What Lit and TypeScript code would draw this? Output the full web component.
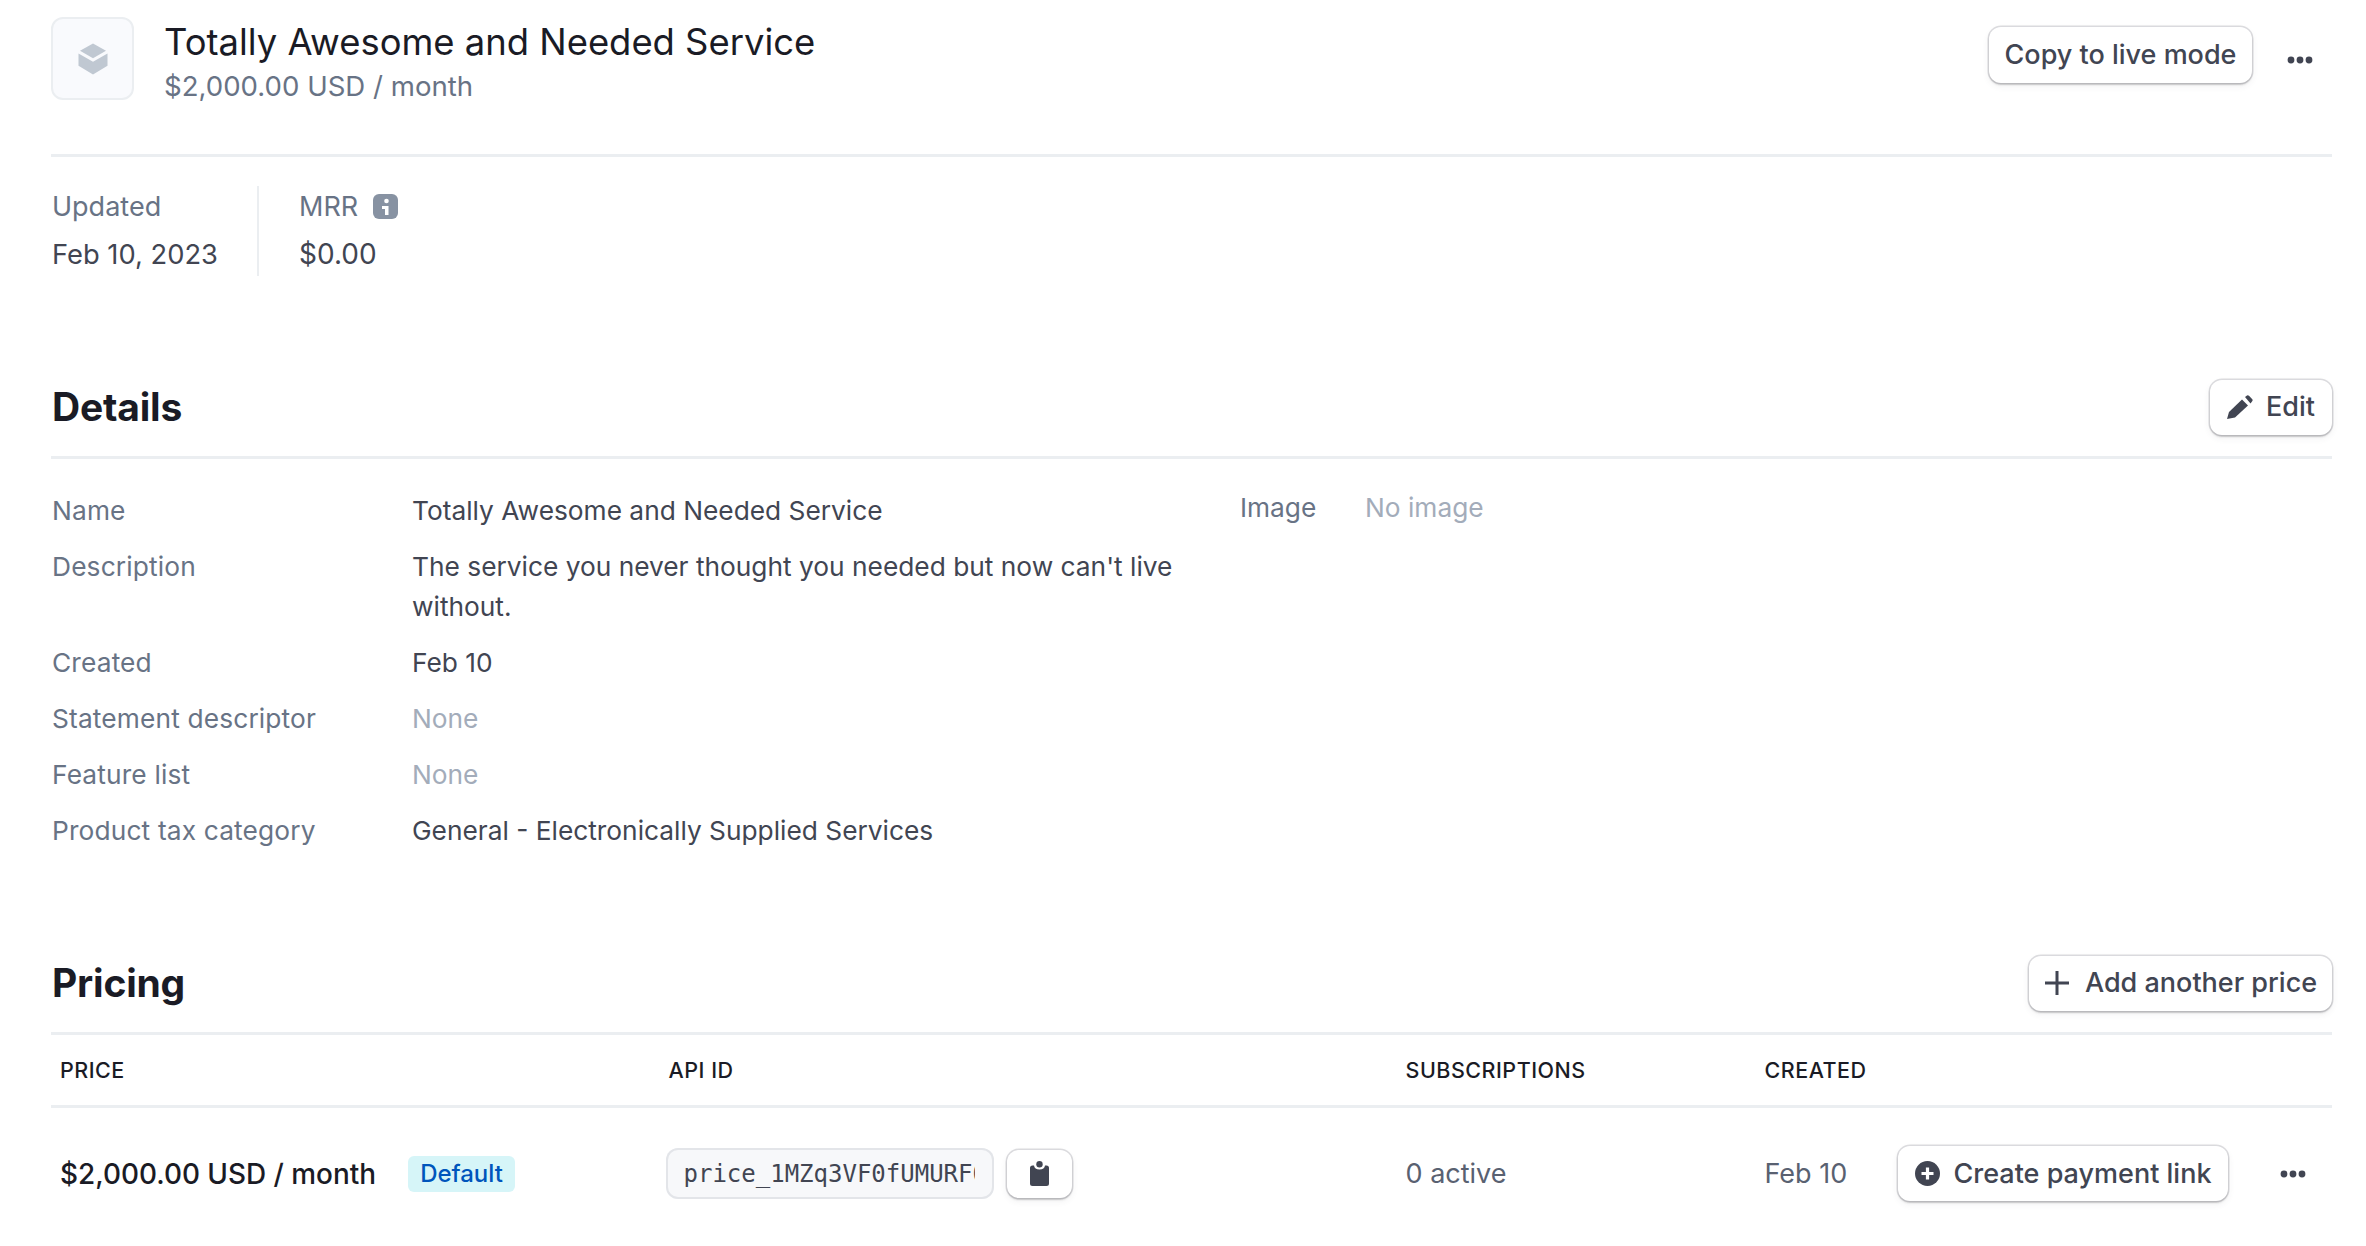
import { LitElement, html, css, svg } from "lit";
import { customElement } from "lit/decorators.js";

const dots = svg`<svg class="dots" viewBox="0 0 26 8" width="26" height="8"><circle cx="4" cy="4" r="3.4"/><circle cx="13" cy="4" r="3.4"/><circle cx="22" cy="4" r="3.4"/></svg>`;

@customElement("app-root")
export class AppRoot extends LitElement {
  static styles = css`
    :host { display: block; width: 2366px; height: 1246px; overflow: hidden; background: #fff; font-family: Inter, "Liberation Sans", sans-serif; color: #414552; font-size: 27px; line-height: 40px; box-sizing: border-box; padding: 17px 34px 0 52px; }
    * { box-sizing: border-box; }
    .top { display: flex; align-items: flex-start; height: 140px; border-bottom: 3px solid #ebeef1; margin-left: -1px; }
    .logo { width: 83px; height: 83px; border: 2.5px solid #ebeef1; border-radius: 12px; background: #f9fafd; display: flex; align-items: center; justify-content: center; margin-right: 31px; flex: none; }
    .titles { flex: 1; margin-left: -1px; }
    .title { font-size: 36.4px; line-height: 46px; color: #1a1b25; margin-top: 2px; }
    .sub { font-size: 27.6px; line-height: 40px; color: #687385; margin-top: 1px; }
    .top-actions { display: flex; align-items: center; padding-top: 10px; }
    .btn { display: inline-flex; align-items: center; height: 55px; background: #fff; border-radius: 12px; font-size: 27px; font-weight: 500; color: #414552; box-shadow: 0 0 0 1.5px rgba(64,68,82,.18), 0 3px 7px rgba(64,68,82,.08), 0 2px 2px rgba(0,0,0,.14); white-space: nowrap; }
    .copy-live { width: 263px; height: 56px; justify-content: center; }
    .dots { fill: #414552; display: block; }
    .top-dots { margin-left: 35px; margin-right: 19px; margin-top: 10px; }
    .stats { display: flex; margin-top: 29px; height: 90px; }
    .stat { display: flex; flex-direction: column; gap: 7px; }
    .stat-a { width: 207px; border-right: 2px solid #ebeef1; }
    .stat-b { padding-left: 40px; }
    .stat .k { color: #687385; display: flex; align-items: center; line-height: 41px; }
    .stat .v { color: #414552; line-height: 41px; font-size: 27.3px; }
    .stat-b .v { font-size: 28px; }
    .info { margin-left: 15px; width: 25px; height: 25px; display: block; }
    .sec-head { display: flex; align-items: center; justify-content: space-between; border-bottom: 3px solid #ebeef1; margin-left: -1px; }
    .sec-head h2 { margin: 0; font-size: 39px; line-height: 58px; font-weight: 700; color: #1a1b25; padding-left: 1px; letter-spacing: -0.2px; }
    .details-head { margin-top: 102px; padding-bottom: 20px; }
    .pricing-head { padding-bottom: 20px; }
    .edit { width: 122px; justify-content: center; gap: 13px; }
    .details { display: flex; padding-top: 32px; height: 495px; font-size: 26.3px; }
    .dl { width: 1188px; display: flex; flex-direction: column; gap: 16px; }
    .row { display: flex; }
    .row .k { width: 360px; color: #687385; flex: none; letter-spacing: 0.15px; }
    .row .v { width: 770px; color: #414552; }
    .row .v.muted, .muted { color: #a3acba; }
    .image { display: flex; margin-top: -3px; }
    .image .k { width: 125px; color: #687385; }
    .add { width: 303px; padding-left: 16px; gap: 16px; }
    .table-head, .table-row { display: grid; grid-template-columns: 608.5px 737px 359px 133.5px 330px 1fr; align-items: center; padding-left: 9px; margin-left: -1px; }
    .table-head { height: 73px; border-bottom: 3px solid #ebeef1; font-size: 21.5px; font-weight: 500; color: #1a1b25; letter-spacing: 0.5px; }
    .table-row { height: 132px; padding-bottom: 1px; }
    .price-cell { display: flex; align-items: center; }
    .price { width: 348px; font-weight: 500; color: #1a1b25; font-size: 27.9px; white-space: nowrap; }
    .badge { width: 107px; height: 36px; display: flex; align-items: center; justify-content: center; background: #d6f5f8; color: #0055bc; border-radius: 6px; font-size: 24px; font-weight: 500; }
    .api-cell { display: flex; align-items: center; gap: 13px; margin-left: -3px; }
    .code { width: 328px; height: 51px; border-radius: 12px; background: #f7f8fa; box-shadow: inset 0 0 0 2px #e3e5e9; padding: 0 18px; display: flex; align-items: center; font-family: "DejaVu Sans Mono", "Liberation Mono", monospace; font-size: 24px; color: #414552; }
    .code span { display: block; overflow: hidden; white-space: nowrap; width: 291px; }
    .clip { width: 65px; height: 48px; justify-content: center; }
    .subs, .created { color: #596171; }
    .pay { width: 330px; justify-content: center; gap: 14px; }
    .row-dots { margin-left: 52px; }
  `;

  private detailRows: [string, string, boolean?][] = [
    ["Name", "Totally Awesome and Needed Service"],
    ["Description", "The service you never thought you needed but now can't live without."],
    ["Created", "Feb 10"],
    ["Statement descriptor", "None", true],
    ["Feature list", "None", true],
    ["Product tax category", "General - Electronically Supplied Services"],
  ];

  render() {
    return html`
      <div class="top">
        <div class="logo">
          <svg width="30" height="32" viewBox="0 0 30 32" fill="#c0c8d2"><path d="M15 0.5 28 7.8 15 15.2 2 7.8Z"/><path d="M0.5 10.5 15 18.8 29.5 10.5V22.8L15 31.5 0.5 22.8Z"/></svg>
        </div>
        <div class="titles">
          <div class="title">Totally Awesome and Needed Service</div>
          <div class="sub">$2,000.00 USD / month</div>
        </div>
        <div class="top-actions">
          <span class="btn copy-live">Copy to live mode</span>
          <span class="top-dots">${dots}</span>
        </div>
      </div>

      <div class="stats">
        <div class="stat stat-a"><div class="k">Updated</div><div class="v">Feb 10, 2023</div></div>
        <div class="stat stat-b">
          <div class="k">MRR
            <svg class="info" viewBox="0 0 25 25"><rect width="25" height="25" rx="6" fill="#8792a2"/><circle cx="13.500" cy="7" r="2.300" fill="#fff"/><path d="M9 12H15.500V21H12V15H9Z" fill="#fff"/></svg>
          </div>
          <div class="v">$0.00</div>
        </div>
      </div>

      <div class="sec-head details-head">
        <h2>Details</h2>
        <span class="btn edit">
          <svg width="26" height="24" viewBox="0 0 26 24" fill="#414552"><path d="M0 24 2 17 15 4.500 21 10.500 8 22.500Z"/><path d="M18 2 20 .5Q21 0 22 .8L25.500 4.500Q26 5.500 25 6.500L23.500 8.500Z"/></svg>
          Edit
        </span>
      </div>
      <div class="details">
        <div class="dl">
          ${this.detailRows.map(([k, v, m]) => html`<div class="row"><div class="k">${k}</div><div class="v ${m ? "muted" : ""}">${v}</div></div>`)}
        </div>
        <div class="image"><div class="k">Image</div><div class="muted">No image</div></div>
      </div>

      <div class="sec-head pricing-head">
        <h2>Pricing</h2>
        <span class="btn add">
          <svg width="24" height="24" viewBox="0 0 24 24" stroke="#414552" stroke-width="3" fill="none"><path d="M12 0V24M0 12H24"/></svg>
          Add another price
        </span>
      </div>
      <div class="table-head">
        <div>PRICE</div><div>API ID</div><div>SUBSCRIPTIONS</div><div>CREATED</div><div></div><div></div>
      </div>
      <div class="table-row">
        <div class="price-cell"><span class="price">$2,000.00 USD / month</span><span class="badge">Default</span></div>
        <div class="api-cell">
          <div class="code"><span>price_1MZq3VF0fUMURF0fUM</span></div>
          <span class="btn clip">
            <svg width="19" height="25" viewBox="0 0 19 25" fill="#414552"><circle cx="9.500" cy="3.300" r="3.200"/><path d="M0 7Q0 4.500 2.500 4.500H4Q4.500 8.500 9.500 8.500Q14.500 8.500 15 4.500H16.500Q19 4.500 19 7V22.500Q19 25 16.500 25H2.500Q0 25 0 22.500Z"/></svg>
          </span>
        </div>
        <div class="subs">0 active</div>
        <div class="created">Feb 10</div>
        <span class="btn pay">
          <svg width="25" height="25" viewBox="0 0 25 25"><circle cx="12.500" cy="12.500" r="12.500" fill="#414552"/><path d="M12.500 6.500V18.500M6.500 12.500H18.500" stroke="#fff" stroke-width="3.200"/></svg>
          Create payment link
        </span>
        <span class="row-dots">${dots}</span>
      </div>
    `;
  }
}
